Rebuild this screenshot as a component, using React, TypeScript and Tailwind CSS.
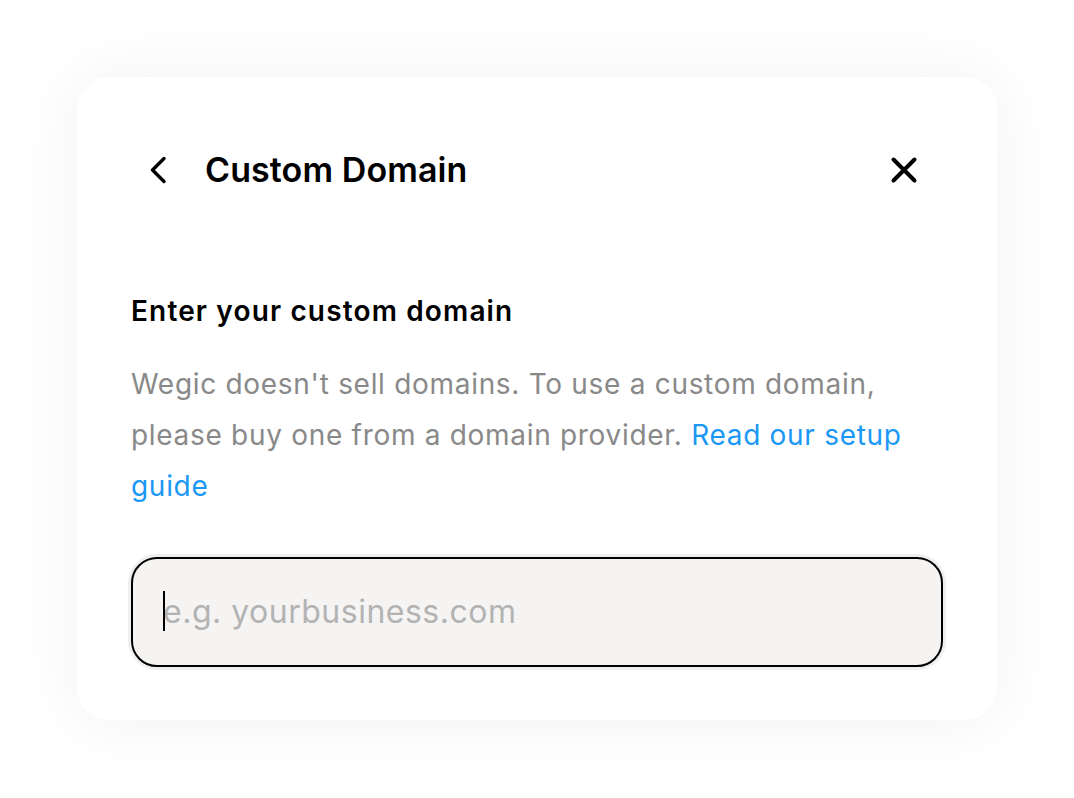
import React from "react";

export default function App() {
  return (
    <div className="min-h-[798px] w-[1074px] bg-white flex items-start justify-center pt-[77px]" style={{ fontFamily: "Inter, 'Noto Sans', sans-serif" }}>
      <div className="w-[920px] h-[643px] bg-white rounded-[32px] shadow-[0_0_70px_rgba(0,0,0,0.06)] px-[54px] pt-[66px]">
        <div className="flex items-center justify-between h-[54px]">
          <div className="flex items-center">
            <svg width="24" height="30" viewBox="0 0 24 30" fill="none" stroke="#000" strokeWidth="3.4" strokeLinecap="round" strokeLinejoin="round" className="ml-[15px]">
              <path d="M18 3.5L6.5 15L18 26.5" />
            </svg>
            <h1 className="ml-[35px] text-[34px] font-semibold text-black tracking-[0.1px] leading-[40px]">Custom Domain</h1>
          </div>
          <svg width="30" height="30" viewBox="0 0 30 30" fill="none" stroke="#000" strokeWidth="4" strokeLinecap="round" className="mr-[24px]">
            <path d="M4.5 4.5L25.5 25.5M25.5 4.5L4.5 25.5" />
          </svg>
        </div>
        <h2 className="mt-[96px] text-[28px] font-semibold text-black leading-[36px] tracking-[1.15px]">Enter your custom domain</h2>
        <p className="mt-[30px] text-[28px] leading-[51px] text-[#898989] tracking-[0.7px]">
          Wegic doesn't sell domains. To use a custom domain, please buy one from a domain provider.{" "}
          <span className="text-[#1b98f5]">Read our setup guide</span>
        </p>
        <div className="mt-[45px] rounded-[26px] shadow-[0_0_0_3px_#efefef]">
          <div className="relative h-[110px] rounded-[26px] border-2 border-black bg-[#f5f4f2] flex items-center pl-[30px]">
            <div className="absolute left-[30px] top-[32px] w-[2px] h-[40px] bg-black" />
            <input className="w-full bg-transparent outline-none text-[32px] tracking-[0.5px] placeholder:text-[#b3b3b3]" placeholder="e.g. yourbusiness.com" />
          </div>
        </div>
      </div>
    </div>
  );
}
